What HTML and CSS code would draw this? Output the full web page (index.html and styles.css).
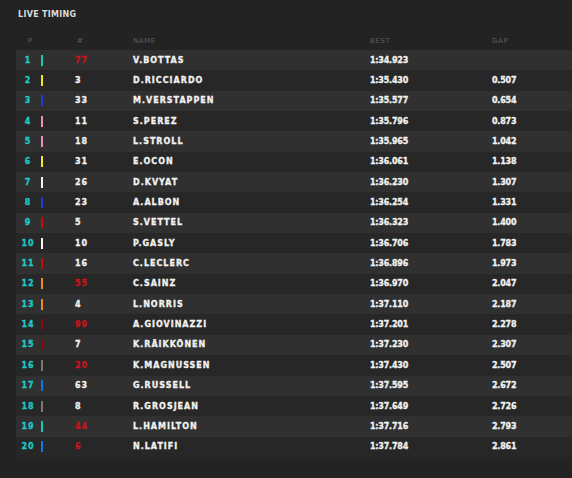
FILE: index.html
```html
<!DOCTYPE html>
<html>
<head>
<meta charset="utf-8">
<link rel="stylesheet" href="styles.css">
</head>
<body>
<div class="panel">
  <h1 class="title">LIVE TIMING</h1>
  <div class="table">
    <div class="row head">
      <span class="pos">P</span><span></span><span class="num">#</span><span>NAME</span><span>BEST</span><span>GAP</span>
    </div>
    <div class="row"><span class="pos">1</span><span class="bar merc"></span><span class="num red">77</span><span>V.BOTTAS</span><span>1:34.923</span><span></span></div>
    <div class="row"><span class="pos">2</span><span class="bar ren"></span><span class="num">3</span><span>D.RICCIARDO</span><span>1:35.430</span><span>0.507</span></div>
    <div class="row"><span class="pos">3</span><span class="bar rbr"></span><span class="num">33</span><span>M.VERSTAPPEN</span><span>1:35.577</span><span>0.654</span></div>
    <div class="row"><span class="pos">4</span><span class="bar rp"></span><span class="num">11</span><span>S.PEREZ</span><span>1:35.796</span><span>0.873</span></div>
    <div class="row"><span class="pos">5</span><span class="bar rp"></span><span class="num">18</span><span>L.STROLL</span><span>1:35.965</span><span>1.042</span></div>
    <div class="row"><span class="pos">6</span><span class="bar ren"></span><span class="num">31</span><span>E.OCON</span><span>1:36.061</span><span>1.138</span></div>
    <div class="row"><span class="pos">7</span><span class="bar at"></span><span class="num">26</span><span>D.KVYAT</span><span>1:36.230</span><span>1.307</span></div>
    <div class="row"><span class="pos">8</span><span class="bar rbr"></span><span class="num">23</span><span>A.ALBON</span><span>1:36.254</span><span>1.331</span></div>
    <div class="row"><span class="pos">9</span><span class="bar fer"></span><span class="num">5</span><span>S.VETTEL</span><span>1:36.323</span><span>1.400</span></div>
    <div class="row"><span class="pos">10</span><span class="bar at"></span><span class="num">10</span><span>P.GASLY</span><span>1:36.706</span><span>1.783</span></div>
    <div class="row"><span class="pos">11</span><span class="bar fer"></span><span class="num">16</span><span>C.LECLERC</span><span>1:36.896</span><span>1.973</span></div>
    <div class="row"><span class="pos">12</span><span class="bar mcl"></span><span class="num red">55</span><span>C.SAINZ</span><span>1:36.970</span><span>2.047</span></div>
    <div class="row"><span class="pos">13</span><span class="bar mcl"></span><span class="num">4</span><span>L.NORRIS</span><span>1:37.110</span><span>2.187</span></div>
    <div class="row"><span class="pos">14</span><span class="bar alfa"></span><span class="num red">99</span><span>A.GIOVINAZZI</span><span>1:37.201</span><span>2.278</span></div>
    <div class="row"><span class="pos">15</span><span class="bar alfa"></span><span class="num">7</span><span>K.RÄIKKÖNEN</span><span>1:37.230</span><span>2.307</span></div>
    <div class="row"><span class="pos">16</span><span class="bar haas"></span><span class="num red">20</span><span>K.MAGNUSSEN</span><span>1:37.430</span><span>2.507</span></div>
    <div class="row"><span class="pos">17</span><span class="bar wil"></span><span class="num">63</span><span>G.RUSSELL</span><span>1:37.595</span><span>2.672</span></div>
    <div class="row"><span class="pos">18</span><span class="bar haas"></span><span class="num">8</span><span>R.GROSJEAN</span><span>1:37.649</span><span>2.726</span></div>
    <div class="row"><span class="pos">19</span><span class="bar merc"></span><span class="num red">44</span><span>L.HAMILTON</span><span>1:37.716</span><span>2.793</span></div>
    <div class="row"><span class="pos">20</span><span class="bar wil"></span><span class="num red">6</span><span>N.LATIFI</span><span>1:37.784</span><span>2.861</span></div>
  </div>
</div>
</body>
</html>
```
FILE: styles.css
```css
html, body {
  margin: 0;
  padding: 0;
  background: #232323;
}
body {
  width: 572px;
  height: 478px;
  overflow: hidden;
  font-family: "DejaVu Sans", sans-serif;
}
.panel {
  padding: 10px 0 0 16px;
}
.title {
  margin: 0 0 0 2px;
  font-size: 8px;
  font-weight: bold;
  color: #dcdcdc;
  letter-spacing: 0.3px;
  line-height: 10px;
  height: 10px;
}
.table {
  margin-top: 16px;
}
.row {
  display: grid;
  grid-template-columns: 24px 35px 58px 237px 122px 1fr;
  align-items: center;
  height: 20.35px;
  font-size: 8px;
  font-weight: bold;
  color: #f2f2f2;
  letter-spacing: 1px;
  -webkit-text-stroke: 0.3px currentColor;
}
.row > span:nth-child(5),
.row > span:nth-child(6) {
  letter-spacing: -0.2px;
}
.row:nth-child(even) {
  background: #303030;
}
.row:nth-child(odd) {
  background: #272727;
}
.row.head {
  background: transparent;
  height: 10px;
  margin-bottom: 4px;
  font-size: 7px;
  font-weight: normal;
  color: #5e5e5e;
  -webkit-text-stroke: 0;
}
.row.head > span {
  letter-spacing: 0.6px;
}
.pos {
  text-align: center;
  color: #1ec8c8;
}
.head .pos {
  color: #5e5e5e;
  padding-left: 5px;
}
.head .num {
  padding-left: 2px;
}
.red {
  color: #c8141c;
}
.bar {
  display: block;
  width: 2px;
  height: 11px;
  margin-left: 1px;
}
.merc { background: #17c8b4; }
.ren { background: #f5e61e; }
.rbr { background: #1e3cdc; }
.rp { background: #f08cbe; }
.at { background: #f5f5f5; }
.fer { background: #c80a0a; }
.mcl { background: #f08c1e; }
.alfa { background: #8c0a0a; }
.haas { background: #787878; }
.wil { background: #0a78e6; }
```
